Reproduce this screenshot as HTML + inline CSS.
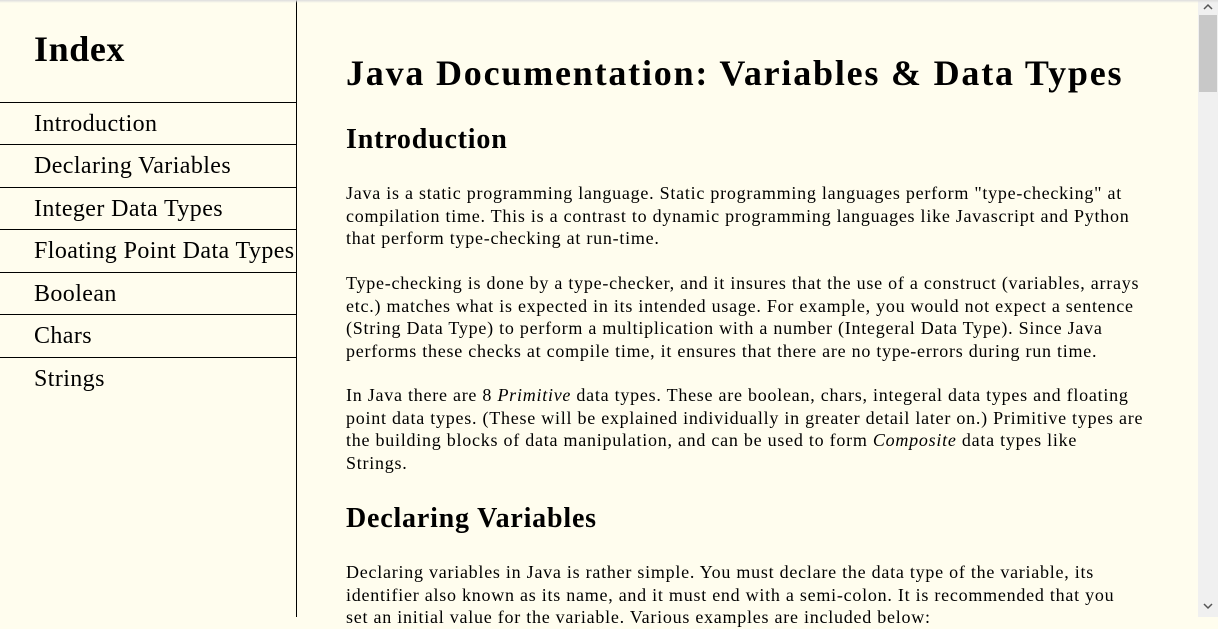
<!DOCTYPE html>
<html><head><style>
html,body{margin:0;padding:0;width:1218px;height:617px;overflow:hidden;background:#fffdee;font-family:"Liberation Serif",serif;color:#000}
#nav{position:absolute;left:0;top:0;width:296px;height:617px;border-right:1px solid #000}
#nav h1{position:absolute;left:34px;top:29px;margin:0;font-size:36px;line-height:40px;letter-spacing:0.6px}
#nav .it{position:absolute;left:0;width:296px;border-top:1px solid #000;font-size:24px;line-height:42px;padding-left:34px;box-sizing:border-box;white-space:nowrap;height:43px;letter-spacing:0.4px;overflow:hidden}
#main{position:absolute;left:346px;top:0;width:820px}
h1.t{position:absolute;top:52px;margin:0;font-size:36px;line-height:42px;white-space:nowrap;letter-spacing:1.8px}
h2{position:absolute;margin:0;font-size:28px;line-height:32px;letter-spacing:0.8px}
p{position:absolute;margin:0;font-size:18px;line-height:22.5px;white-space:nowrap;letter-spacing:0.75px}
#sb{position:absolute;left:1198px;top:0;width:20px;height:617px;background:#f0f0f0}
#th{position:absolute;left:1199px;top:15px;width:18px;height:77px;background:#c8c8c8}
#sh{position:absolute;left:0;top:0;width:1218px;height:3px;background:linear-gradient(#ddd,rgba(255,255,255,0))}
</style></head><body>
<div id="nav">
<h1>Index</h1>
<div class="it" style="top:102px">Introduction</div>
<div class="it" style="top:144px">Declaring Variables</div>
<div class="it" style="top:187px">Integer Data Types</div>
<div class="it" style="top:229px">Floating Point Data Types</div>
<div class="it" style="top:272px">Boolean</div>
<div class="it" style="top:314px">Chars</div>
<div class="it" style="top:357px">Strings</div>
</div>
<div id="main">
<h1 class="t">Java Documentation: Variables &amp; Data Types</h1>
<h2 style="top:124px">Introduction</h2>
<p style="top:182px">Java is a static programming language. Static programming languages perform "type-checking" at<br>compilation time. This is a contrast to dynamic programming languages like Javascript and Python<br>that perform type-checking at run-time.</p>
<p style="top:272px">Type-checking is done by a type-checker, and it insures that the use of a construct (variables, arrays<br>etc.) matches what is expected in its intended usage. For example, you would not expect a sentence<br>(String Data Type) to perform a multiplication with a number (Integeral Data Type). Since Java<br>performs these checks at compile time, it ensures that there are no type-errors during run time.</p>
<p style="top:384px">In Java there are 8 <i>Primitive</i> data types. These are boolean, chars, integeral data types and floating<br>point data types. (These will be explained individually in greater detail later on.) Primitive types are<br>the building blocks of data manipulation, and can be used to form <i>Composite</i> data types like<br>Strings.</p>
<h2 style="top:503px">Declaring Variables</h2>
<p style="top:561px">Declaring variables in Java is rather simple. You must declare the data type of the variable, its<br>identifier also known as its name, and it must end with a semi-colon. It is recommended that you<br>set an initial value for the variable. Various examples are included below:</p>
</div>
<div id="sb"></div><div id="th"></div>
<svg style="position:absolute;left:1198px;top:0" width="20" height="617"><path d="M6 9l4-4 4 4" stroke="#555" stroke-width="1.5" fill="none"/><path d="M6 604l4 4 4-4" stroke="#555" stroke-width="1.5" fill="none"/></svg>
<div id="sh"></div>
</body></html>
